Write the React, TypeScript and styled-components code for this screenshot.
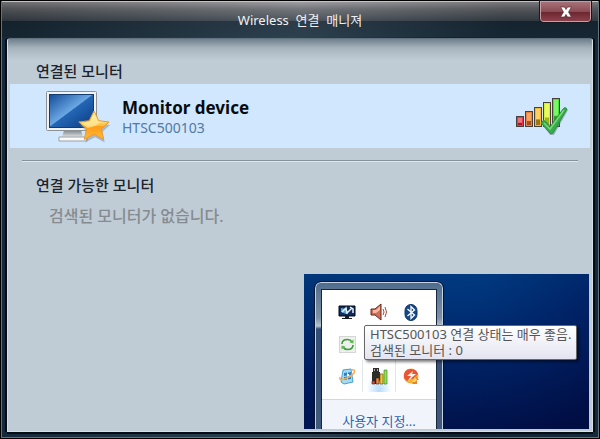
import React from "react";
import styled, { createGlobalStyle } from "styled-components";

const GlobalStyle = createGlobalStyle`
  *, *::before, *::after { box-sizing: border-box; }
  body {
    margin: 0;
    background: #000;
    font-family: "Noto Sans", "Noto Sans CJK KR", sans-serif;
  }
  h1, h2, p { margin: 0; }
  svg { display: block; }
`;

const Window = styled.div`
  min-height: 100vh;
  display: flex;
  flex-direction: column;
  padding: 0 6px 6px;
  border: 1px solid #000;
  background: linear-gradient(90deg, #142a3c, #2c4354 48%, #122332 75%, #142a3c);
  box-shadow: inset 0 0 0 1px #65737d;
`;

const TitleBar = styled.header`
  display: grid;
  grid-template-columns: 1fr auto 1fr;
  height: 36px;
  margin: 0 -5px;
  border-top: 1px solid #c6c2c9;
  background:
    linear-gradient(90deg, rgba(0, 0, 0, 0.25), rgba(255, 255, 255, 0.08) 50%, rgba(0, 0, 0, 0.2) 85%),
    linear-gradient(#96959b, #686b70 7px, #3c464f 19px, #1a2c3a 19px, #1b303f);
`;

const Title = styled.h1`
  grid-column: 2;
  padding-top: 8px;
  color: #f0f0f2;
  font-size: 13px;
  line-height: 20px;
  font-weight: 400;
  white-space: pre;
`;

const CloseButton = styled.button`
  justify-self: end;
  display: grid;
  place-items: center;
  width: 51px;
  height: 21px;
  margin: -1px 7px 0 0;
  padding: 0;
  border: 1px solid #c99da4;
  border-radius: 0 0 3px 3px;
  outline: 1px solid #161a20;
  background: linear-gradient(#a47278, #8c4a53 10px, #6c2630 10px, #8b414c);
`;

const Panel = styled.main`
  flex: 1;
  display: flex;
  flex-direction: column;
  margin-top: 1px;
  padding: 0 2px 2px;
  border: 1px solid #d5e0e8;
  border-top-color: #62727f;
  border-radius: 3px 3px 0 0;
  box-shadow: -2px 0 #050c13, 2px 0 #050c13, 0 2px #050c13;
  background: linear-gradient(#6f7f8c, #a6b3bd 9px, #c0ccd5 21px);
`;

const SectionTitle = styled.h2`
  padding: 0 26px;
  color: #1c232b;
  font-size: 15px;
  line-height: 20px;
  font-weight: 500;
`;

const ConnectedSection = styled.section`
  padding-top: 22px;
`;

const Device = styled.article`
  display: flex;
  align-items: center;
  height: 64px;
  margin-top: 3px;
  padding: 0 20px 0 34px;
  background: #d1e7fe;
`;

const DeviceText = styled.div`
  flex: 1;
  padding: 2px 0 0 10px;
`;

const DeviceName = styled.p`
  color: #080b10;
  font-size: 17px;
  line-height: 22px;
  font-weight: 700;
`;

const DeviceId = styled.p`
  color: #5279a5;
  font-size: 14px;
  line-height: 18px;
`;

const Divider = styled.hr`
  width: auto;
  height: 2px;
  margin: 12px 12px 0;
  border: 0;
  background: linear-gradient(#84909a 1px, #e0e7ec 1px);
`;

const AvailableSection = styled.section`
  padding-top: 13px;
`;

const Empty = styled.p`
  padding: 10px 39px 0;
  color: #858b90;
  font-size: 16px;
  line-height: 22px;
  font-weight: 500;
`;

const Desktop = styled.section`
  position: relative;
  align-self: flex-end;
  display: flex;
  width: 285px;
  height: 155px;
  margin: auto 1px 0 0;
  padding: 8px 0 0 11px;
  overflow: hidden;
  background:
    radial-gradient(ellipse at 60% 0, rgba(0, 82, 160, 0.4), transparent 75%),
    linear-gradient(165deg, #003779, #001a5c 45%, #000d42);
`;

const Tray = styled.div`
  width: 128px;
  padding: 6px 5px 0;
  border: 1px solid #c5d2df;
  border-bottom: 0;
  border-radius: 6px 6px 0 0;
  outline: 1px solid #03142e;
  background: linear-gradient(#506d8e, #7d91a6 35px, #b8c4d0 43px, #324d76 46px, #425a7d);
`;

const TrayBody = styled.div`
  height: 100%;
  border: 1px solid #17283e;
  border-bottom: 0;
  background: #fff;
`;

const TrayGrid = styled.div`
  display: grid;
  grid-template-columns: repeat(3, 32px);
  grid-template-rows: repeat(3, 32px);
  justify-content: center;
  height: 109px;
  padding-top: 6px;
`;

const TrayButton = styled.button<{ $active?: boolean }>`
  display: grid;
  place-items: center;
  padding: 0;
  border: 0;
  background: ${({ $active }) =>
    $active ? "radial-gradient(ellipse at 50% 100%, #b5dcff, #fff 55%)" : "none"};
  box-shadow: ${({ $active }) => ($active ? "-1px 0 #e1e6eb, 1px 0 #e1e6eb" : "none")};
`;

const TrayFooter = styled.div`
  height: 31px;
  padding-top: 11px;
  border-top: 1px solid #ccd9ea;
  background: #f1f5fb;
  text-align: center;
`;

const CustomizeLink = styled.a`
  display: block;
  color: #1f67b5;
  font-size: 13px;
  line-height: 20px;
  text-decoration: none;
  white-space: nowrap;
`;

const Tooltip = styled.div`
  position: absolute;
  top: 51px;
  left: 60px;
  padding: 0 5px 1px;
  border: 1px solid #686868;
  border-radius: 2px;
  background: linear-gradient(#fff, #e3e4f0);
  box-shadow: 2px 2px 3px rgba(0, 0, 0, 0.5);
  color: #555;
  font-size: 13px;
  line-height: 16px;
  white-space: nowrap;
`;

const MonitorIcon = () => (
  <svg width="68" height="54" viewBox="0 0 68 54" aria-hidden="true">
    <defs>
      <linearGradient id="screen" x1="0" y1="0" x2="1" y2="1">
        <stop offset="0" stopColor="#164e99" />
        <stop offset="0.48" stopColor="#6ba7e4" />
        <stop offset="0.5" stopColor="#2466b4" />
        <stop offset="1" stopColor="#093b83" />
      </linearGradient>
      <linearGradient id="star" x1="0" y1="0" x2="0" y2="1">
        <stop offset="0" stopColor="#fff4a0" />
        <stop offset="0.5" stopColor="#ffc143" />
        <stop offset="0.55" stopColor="#ff9c16" />
        <stop offset="1" stopColor="#ffb93f" />
      </linearGradient>
      <linearGradient id="stand" x1="0" y1="0" x2="0" y2="1">
        <stop offset="0" stopColor="#777f86" />
        <stop offset="1" stopColor="#f0f0ee" />
      </linearGradient>
    </defs>
    <path d="M20 41h17l2 8H18z" fill="url(#stand)" />
    <path d="M15 48h28v4H15z" fill="#fafafa" stroke="#9aa2a8" />
    <rect x="2.500" y="2.500" width="50" height="39" rx="1" fill="#f0f2f2" stroke="#8b9298" />
    <rect x="5" y="5" width="45" height="34" fill="#123b70" />
    <path d="M6 6h43v32H6z" fill="url(#screen)" />
    <path d="M50 23l4.800 9.700 10.200 1.300-7.600 7 2.300 10.500L50 46.300l-9.700 5.200 2.200-10.500-7.700-7 10.400-1.300z" fill="#78808a" opacity=".45" transform="translate(1 2)" />
    <path d="M50 22l4.800 9.700 10.200 1.300-7.600 7 2.300 10.500L50 45.300l-9.700 5.200 2.200-10.500-7.700-7 10.400-1.300z" fill="url(#star)" stroke="#e99a2b" strokeLinejoin="round" />
    <path d="M50 24.500l-4 8-8.500 1.200 6 5.300q7-1 12-5.300l7-.2-8.300-1.200z" fill="#fff3ac" opacity=".65" />
  </svg>
);

const bars = [
  { x: 0, y: 20, top: "#f28a91", side: "#e53849", base: "#9f1522" },
  { x: 9, y: 15, top: "#ffb173", side: "#ee8138", base: "#984511" },
  { x: 18, y: 11, top: "#ffdc75", side: "#f5b82f", base: "#8c6811" },
  { x: 27, y: 6, top: "#eeff80", side: "#d4ef27", base: "#98a916" },
  { x: 36, y: 2, top: "#90ff80", side: "#46df33", base: "#299623" },
];

const SignalIcon = () => (
  <svg width="54" height="40" viewBox="0 0 54 40" role="img" aria-label="Signal">
    {bars.map((b) => (
      <g key={b.x}>
        <rect x={b.x + 0.5} y={b.y + 0.5} width="7" height={30 - b.y} fill={b.side} stroke="#48413b" />
        <path d={`M${b.x + 2} ${b.y + 2}h4v${(28 - b.y) * 0.6}h-4z`} fill={b.top} opacity=".7" />
        <path d={`M${b.x + 2} ${30 - (28 - b.y) * 0.38}h4V29h-4z`} fill={b.base} opacity=".85" />
      </g>
    ))}
    <path d="M26 28l4-3 5 5L48 13q2-1 4 1L38 39h-4z" fill="#627780" opacity=".5" />
    <path d="M25 27q2-4 4-2l5 6L47 13q2-3 4 0L37 37q-2 2-4-1z" fill="#36ad4c" stroke="#2c9144" />
    <path d="M28 27l6 6 14-19" fill="none" stroke="#79d772" strokeWidth="1.500" />
  </svg>
);

const CloseIcon = () => (
  <svg width="14" height="12" viewBox="0 0 14 12" aria-hidden="true">
    <path d="M1.500 1h4L7 3.500 8.500 1h4L9.500 6l3 5h-4L7 8.500 5.500 11h-4l3-5z" fill="#fff" stroke="#572c34" strokeWidth=".7" />
  </svg>
);

const DisplayTrayIcon = () => (
  <svg width="18" height="16" viewBox="0 0 18 16">
    <path d="M1 2h16v10H1z" fill="#102d5d" stroke="#05090e" />
    <path d="M3 4l5 1v5L3 8z" fill="#54a7e4" />
    <path d="M4 8l4-4 1 6M9 9l5-5M12 3l3 2v4" fill="none" stroke="#e7f5ff" strokeWidth="1.500" />
    <path d="M7 12h4v2h3v1H4v-1h3z" fill="#181c24" />
  </svg>
);

const SpeakerIcon = () => (
  <svg width="18" height="18" viewBox="0 0 18 18">
    <path d="M1 6h4l6-5v16l-6-5H1z" fill="#c97058" stroke="#69251d" />
    <path d="M3 7h3l4-4v4L6 10H3z" fill="#ffb49d" />
    <path d="M13 6q2 3 0 6m2-8q3 5 0 10" fill="none" stroke="#a75035" />
  </svg>
);

const BluetoothIcon = () => (
  <svg width="14" height="17" viewBox="0 0 14 17">
    <rect x="1" y=".5" width="12" height="16" rx="6" fill="#174886" stroke="#0b3569" />
    <path d="M3.500 5l7 6-3.500 3.500V2.500L10.500 6l-7 6" fill="none" stroke="#fff" strokeWidth="1.300" />
  </svg>
);

const SyncIcon = () => (
  <svg width="17" height="17" viewBox="0 0 17 17">
    <rect x=".5" y=".5" width="16" height="16" fill="#edf0ec" stroke="#d3d6d2" />
    <path d="M3 8q0-4.500 5.500-4.500 3 0 4.500 2.500M14 9q0 4.500-5.500 4.500-3 0-4.500-2.500" fill="none" stroke="#3d9a3e" strokeWidth="1.600" />
    <path d="M14.500 3.500v4l-4-1zM2.500 13.500v-4l4 1z" fill="#64b957" />
  </svg>
);

const UpdateIcon = () => (
  <svg width="17" height="17" viewBox="0 0 17 17">
    <path d="M4 2l8-1 2 13-9 2-3-2z" fill="#a4dcf4" stroke="#4a9fcb" />
    <path d="M5 5l3-.5v3L5 8zm4-.6l3-.4v3l-3 .4zM5 9l3-.5v3L5 12zm4-.7l3-.4v3l-3 .5z" fill="#2f80c8" />
    <path d="M1 9q-1 4 4 2Q12 9 15 5q2-4-3-3" fill="none" stroke="#f3ad53" strokeWidth="1.500" />
    <path d="M8 6h2v2H8z" fill="#fff" />
  </svg>
);

const WirelessTrayIcon = () => (
  <svg width="17" height="17" viewBox="0 0 17 17">
    <path d="M2 0h6v4h1v8q-1 3-4 4H3q-2-1-2-4V4h1z" fill="#2c2c28" />
    <path d="M3 1h1v2H3zm3 0h1v2H6z" fill="#aaa" />
    <path d="M1 13h3v3H1z" fill="#ed4b3e" stroke="#342018" strokeWidth=".6" />
    <path d="M5 10h3v6H5z" fill="#f58c3d" stroke="#342018" strokeWidth=".6" />
    <path d="M9 6h3v10H9z" fill="#efc93a" stroke="#504313" strokeWidth=".6" />
    <path d="M13 2h3v14h-3z" fill="#94e34d" stroke="#3b7029" strokeWidth=".6" />
  </svg>
);

const PowerIcon = () => (
  <svg width="17" height="17" viewBox="0 0 17 17">
    <circle cx="8" cy="8" r="7.500" fill="#f7b02f" />
    <path d="M1 10Q0 1 8 1q5 0 7 5l-5 5-3-1-3 3z" fill="#e9553c" />
    <path d="M10 3L4 8h4l-3 5 8-7H9z" fill="#fff6e5" />
    <path d="M12 7l4 5h-2v4H9l2-3z" fill="#ef7f2d" />
    <path d="M12 9l2 3-2 2H9z" fill="#ffd65a" />
  </svg>
);

const trayItems = [
  { label: "Display", Icon: DisplayTrayIcon },
  { label: "Volume", Icon: SpeakerIcon },
  { label: "Bluetooth", Icon: BluetoothIcon },
  { label: "Sync", Icon: SyncIcon },
  { label: "", Icon: null },
  { label: "", Icon: null },
  { label: "Update", Icon: UpdateIcon },
  { label: "Wireless", Icon: WirelessTrayIcon, active: true },
  { label: "Power", Icon: PowerIcon },
];

export default function App() {
  return (
    <>
      <GlobalStyle />
      <Window>
        <TitleBar>
          <Title>Wireless  연결  매니져</Title>
          <CloseButton aria-label="Close">
            <CloseIcon />
          </CloseButton>
        </TitleBar>
        <Panel>
          <ConnectedSection>
            <SectionTitle>연결된 모니터</SectionTitle>
            <Device>
              <MonitorIcon />
              <DeviceText>
                <DeviceName>Monitor device</DeviceName>
                <DeviceId>HTSC500103</DeviceId>
              </DeviceText>
              <SignalIcon />
            </Device>
          </ConnectedSection>
          <Divider />
          <AvailableSection>
            <SectionTitle>연결 가능한 모니터</SectionTitle>
            <Empty>검색된 모니터가 없습니다.</Empty>
          </AvailableSection>
          <Desktop>
            <Tray>
              <TrayBody>
                <TrayGrid>
                  {trayItems.map(({ label, Icon, active }, i) =>
                    Icon ? (
                      <TrayButton key={i} aria-label={label} $active={active}>
                        <Icon />
                      </TrayButton>
                    ) : (
                      <span key={i} />
                    ),
                  )}
                </TrayGrid>
                <TrayFooter>
                  <CustomizeLink href="#customize">사용자 지정...</CustomizeLink>
                </TrayFooter>
              </TrayBody>
            </Tray>
            <Tooltip role="tooltip">
              HTSC500103 연결 상태는 매우 좋음.
              <br />
              검색된 모니터 : 0
            </Tooltip>
          </Desktop>
        </Panel>
      </Window>
    </>
  );
}
